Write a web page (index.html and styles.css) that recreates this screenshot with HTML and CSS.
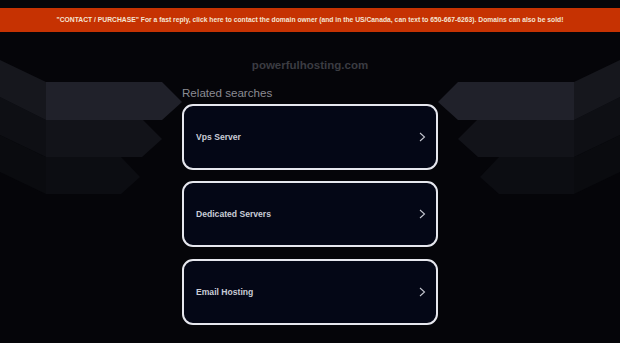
FILE: index.html
```html
<!DOCTYPE html>
<html lang="en">
<head>
    <meta charset="UTF-8">
    <meta name="viewport" content="width=device-width, initial-scale=1.0">
    <title>powerfulhosting.com</title>
    <link rel="stylesheet" href="styles.css">
</head>
<body>
    <!-- decorative arrows behind the content -->
    <svg class="backdrop" width="620" height="343" viewBox="0 0 620 343" aria-hidden="true">
        <g class="left">
            <polygon class="side s3" points="0,135 46,157 46,194 0,172"/>
            <polygon class="side s2" points="0,97 46,120 46,157 0,135"/>
            <polygon class="side s1" points="0,60 46,82 46,120 0,97"/>
            <polygon class="front f3" points="46,157 121,157 140,177 121,194 46,194"/>
            <polygon class="front f2" points="46,120 143,120 162,139 142,157 46,157"/>
            <polygon class="front f1" points="46,82 162,82 182,102 162,120 46,120"/>
        </g>
        <g class="right">
            <polygon class="side s3" points="620,135 574,157 574,194 620,172"/>
            <polygon class="side s2" points="620,97 574,120 574,157 620,135"/>
            <polygon class="side s1" points="620,60 574,82 574,120 620,97"/>
            <polygon class="front f3" points="574,157 499,157 480,177 499,194 574,194"/>
            <polygon class="front f2" points="574,120 477,120 458,139 478,157 574,157"/>
            <polygon class="front f1" points="574,82 458,82 438,102 458,120 574,120"/>
        </g>
    </svg>

    <div class="page">
        <a class="banner" href="#">"CONTACT / PURCHASE" For a fast reply, click here to contact the domain owner (and in the US/Canada, can text to 650-667-6263). Domains can also be sold!</a>

        <div class="domain">powerfulhosting.com</div>

        <div class="related">
            <div class="related-title">Related searches</div>
            <div class="link-list">
                <a class="link-card" href="#">
                    <span>Vps Server</span>
                    <svg class="chevron" width="7" height="10" viewBox="0 0 7 10"><polyline points="1,1 5.5,5 1,9"/></svg>
                </a>
                <a class="link-card" href="#">
                    <span>Dedicated Servers</span>
                    <svg class="chevron" width="7" height="10" viewBox="0 0 7 10"><polyline points="1,1 5.5,5 1,9"/></svg>
                </a>
                <a class="link-card" href="#">
                    <span>Email Hosting</span>
                    <svg class="chevron" width="7" height="10" viewBox="0 0 7 10"><polyline points="1,1 5.5,5 1,9"/></svg>
                </a>
            </div>
        </div>
    </div>
</body>
</html>
```

FILE: styles.css
```css
* {
    margin: 0;
    padding: 0;
    box-sizing: border-box;
}

body {
    font-family: "Liberation Sans", Arial, sans-serif;
    background: #050509;
    min-height: 100vh;
    color: #c9ccd6;
    overflow: hidden;
}

.backdrop {
    position: absolute;
    top: 0;
    left: 0;
    z-index: 0;
}

.front.f1 { fill: #20212a; }
.front.f2 { fill: #121319; }
.front.f3 { fill: #0c0d12; }
.side.s1 { fill: #16171d; }
.side.s2 { fill: #0e0f14; }
.side.s3 { fill: #0a0b0f; }

.page {
    position: relative;
    z-index: 1;
    padding-top: 8px;
}

.banner {
    display: block;
    height: 24px;
    line-height: 24.5px;
    background: #c63202;
    color: #f5e4d2;
    font-size: 6.75px;
    font-weight: bold;
    text-align: center;
    text-decoration: none;
    white-space: nowrap;
}

.domain {
    margin-top: 26px;
    line-height: 14px;
    font-size: 11.5px;
    font-weight: bold;
    color: #3b3c42;
    text-align: center;
}

.related {
    width: 256px;
    margin: 14px auto 0;
}

.related-title {
    line-height: 14px;
    font-size: 11.6px;
    color: #8b8c93;
}

.link-list {
    display: flex;
    flex-direction: column;
    gap: 11.5px;
    margin-top: 3.5px;
}

.link-card {
    display: flex;
    align-items: center;
    justify-content: space-between;
    height: 66px;
    padding: 0 10px 0 12px;
    border: 2px solid #e6e7ee;
    border-radius: 11px;
    background: #040716;
    color: #c9ccd6;
    font-size: 8.6px;
    font-weight: bold;
    text-decoration: none;
}

.chevron polyline {
    fill: none;
    stroke: #c4c6cf;
    stroke-width: 1.1;
}
```
